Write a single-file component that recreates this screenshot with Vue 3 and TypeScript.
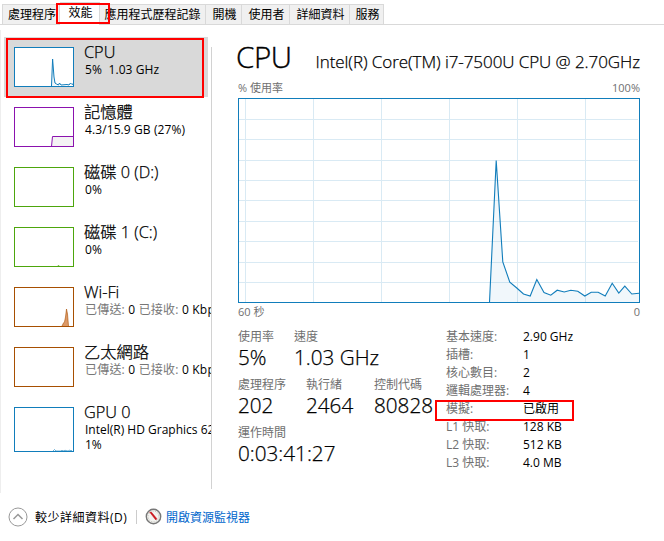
<script setup lang="ts">
interface Resource {
  name: string
  kind: string
  color: string
  detail?: string
  sent?: string
  received?: string
  extra?: string
  line?: string
  fill?: string
}

const tabs = [
  { label: '處理程序', key: 'processes' },
  { label: '效能', key: 'performance' },
  { label: '應用程式歷程記錄', key: 'history' },
  { label: '開機', key: 'startup' },
  { label: '使用者', key: 'users' },
  { label: '詳細資料', key: 'details' },
  { label: '服務', key: 'services' },
]

const resources: Resource[] = [
  { name: 'CPU', kind: 'cpu', color: '#117dbb', detail: '5%  1.03 GHz', line: '37.5,39 38.6,12 40,30 41,36 42.5,37 44.5,38 45.5,36 47,38 53,37.5 55,38 56.5,36 58,37.5 59.5,36.5', fill: '#f1f6fa' },
  { name: '記憶體', kind: 'memory', color: '#8b12ae', detail: '4.3/15.9 GB (27%)', line: '37.5,39.5 38.5,29.5 60,29.5', fill: '#f4f2f4' },
  { name: '磁碟 0 (D:)', kind: 'disk', color: '#4da60c', detail: '0%' },
  { name: '磁碟 1 (C:)', kind: 'disk', color: '#4da60c', detail: '0%', line: '44,39 44.5,38 45,39', fill: 'none' },
  { name: 'Wi-Fi', kind: 'wifi', color: '#a74f01', sent: '0', received: '0', line: '48,39 49.5,36 50.5,35 51.5,30 52.5,22 53.5,27 54.5,39', fill: '#dd9a68' },
  { name: '乙太網路', kind: 'ethernet', color: '#a74f01', sent: '0', received: '0' },
  { name: 'GPU 0', kind: 'gpu', color: '#117dbb', detail: 'Intel(R) HD Graphics 620', extra: '1%', line: '39,44 40.5,42.5 42,44 47,44 48,43 49,44 51,43.3 54,44 56,43 57,44 58,43', fill: 'none' },
]

const usage = '251.5,204.5 258.2,62.5 264.8,164 271.8,184.2 278.8,190 285.5,196 292.2,198 298.8,181.5 306,194.5 312.8,197.2 319.2,192.2 326.2,194 332.8,192.2 339.8,193.2 346.8,198 353.2,194.2 360.2,194.2 367.2,198 374.2,185.2 380.8,195 386.8,188.2 393.8,196 401,195.2'
const columns = [7.5, 75.5, 143.5, 211.5, 279.5, 347.5]
const rows = [21.5, 41.5, 62.5, 82.5, 102.5, 123.5, 143.5, 164.5, 184.5]

const stats = [
  [{ label: '使用率', value: '5%' }, { label: '速度', value: '1.03 GHz' }],
  [{ label: '處理程序', value: '202' }, { label: '執行緒', value: '2464' }, { label: '控制代碼', value: '80828' }],
  [{ label: '運作時間', value: '0:03:41:27' }],
]

const specs = [
  { label: '基本速度:', value: '2.90 GHz' },
  { label: '插槽:', value: '1' },
  { label: '核心數目:', value: '2' },
  { label: '邏輯處理器:', value: '4' },
  { label: '模擬:', value: '已啟用' },
  { label: 'L1 快取:', value: '128 KB' },
  { label: 'L2 快取:', value: '512 KB' },
  { label: 'L3 快取:', value: '4.0 MB' },
]
</script>

<template>
  <main class="window">
    <nav class="tabs">
      <div v-for="tab in tabs" :key="tab.key" class="tab" :class="[tab.key, { active: tab.key === 'performance' }]">
        {{ tab.label }}
        <i v-if="tab.key === 'performance'" class="mark" />
      </div>
    </nav>

    <div class="body">
      <aside class="side">
        <div v-for="r in resources" :key="r.name" class="item" :class="[r.kind, { selected: r.kind === 'cpu' }]">
          <svg class="thumb" width="60" :height="r.kind === 'gpu' ? 45 : 40">
            <rect x="0.5" y="0.5" width="59" :height="r.kind === 'gpu' ? 44 : 39" fill="#fff" :stroke="r.color" />
            <polyline v-if="r.line && r.kind === 'memory'" points="38,39 39,30 59,30 59,39" :fill="r.fill" />
            <polyline v-if="r.line" :points="r.line" :fill="r.kind === 'memory' ? 'none' : r.fill" :stroke="r.color" :stroke-width="r.kind === 'cpu' || r.kind === 'memory' ? 1 : 0.6" />
          </svg>
          <div class="text">
            <div class="name">{{ r.name }}</div>
            <div v-if="r.detail" class="detail">{{ r.detail }}</div>
            <div v-else class="detail net"><span>已傳送:</span> {{ r.sent }} <span>已接收:</span> {{ r.received }} Kbps</div>
            <div v-if="r.extra" class="detail extra">{{ r.extra }}</div>
          </div>
          <i v-if="r.kind === 'cpu'" class="mark" />
        </div>
      </aside>

      <section class="panel">
        <header class="head">
          <h1>CPU</h1>
          <div class="model">Intel(R) Core(TM) i7-7500U CPU @ 2.70GHz</div>
        </header>
        <div class="axis top"><span>% 使用率</span><span>100%</span></div>
        <svg class="chart" width="402" height="205">
          <g stroke="#d9eaf4">
            <line v-for="x in columns" :key="'c' + x" :x1="x" :x2="x" y1="1" y2="204" />
            <line v-for="y in rows" :key="'r' + y" x1="1" x2="400" :y1="y" :y2="y" />
          </g>
          <polygon :points="usage + ' 401,204.5'" fill="#117dbb" fill-opacity="0.06" />
          <polyline :points="usage" fill="none" stroke="#117dbb" stroke-width="1.1" />
          <rect x="0.5" y="0.5" width="401" height="204" fill="none" stroke="#117dbb" />
        </svg>
        <div class="axis bottom"><span>60 秒</span><span>0</span></div>

        <div class="facts">
          <div class="stats">
            <div v-for="(line, i) in stats" :key="i" class="stat-row" :class="'row' + i">
              <div v-for="s in line" :key="s.label" class="stat">
                <div class="label">{{ s.label }}</div>
                <div class="value">{{ s.value }}</div>
              </div>
            </div>
          </div>
          <dl class="specs">
            <div v-for="s in specs" :key="s.label" class="spec">
              <dt>{{ s.label }}</dt>
              <dd>{{ s.value }}</dd>
              <i v-if="s.label === '模擬:'" class="mark" />
            </div>
          </dl>
        </div>
      </section>
    </div>

    <footer class="foot">
      <svg class="chevron" width="20" height="20" fill="none">
        <circle cx="10" cy="10" r="9" stroke="#999" />
        <path d="M5.5 12 L10 7.5 L14.5 12" stroke="#999" stroke-width="1.5" />
      </svg>
      <span class="fewer">較少詳細資料(D)</span>
      <i class="rule" />
      <svg class="gauge" width="17" height="17" fill="none">
        <circle cx="8.5" cy="8.5" r="7.2" fill="#f3f3f0" stroke="#777" stroke-width="1.4" />
        <circle cx="8.5" cy="8.5" r="5.4" stroke="#b8b8b0" stroke-width="1" stroke-dasharray="1 1.4" />
        <path d="M4.6 4.1 L6.6 4.3 L11.9 10.8 L10.8 12 Z" fill="#c9141b" stroke="#c9141b" stroke-width="0.5" />
      </svg>
      <a class="monitor">開啟資源監視器</a>
    </footer>
  </main>
</template>

<style>
body {
  background: #fff;
}
</style>

<style scoped>
* {
  box-sizing: border-box;
}

.window {
  width: 664px;
  height: 541px;
  overflow: hidden;
  display: flex;
  flex-direction: column;
  font-family: 'Open Sans', 'Noto Sans CJK TC', sans-serif;
  font-size: 12px;
  color: #000;
  background: #fff;
}

.tabs {
  display: flex;
  height: 25px;
  padding: 4px 0 0 2px;
  box-shadow: inset 0 -1px #d9d9d9;
}

.tab {
  height: 21px;
  padding-left: 2px;
  border: 1px solid #d9d9d9;
  border-left: 0;
  background: #f0f0f0;
  line-height: 19px;
  text-align: center;
  white-space: nowrap;
}

.processes {
  width: 58px;
  border-left: 1px solid #d9d9d9;
}

.performance {
  width: 40px;
}

.history {
  width: 106px;
  padding-left: 0;
}

.startup {
  width: 36px;
}

.users {
  width: 48px;
}

.details {
  width: 60px;
}

.services {
  width: 34px;
}

.tab.active {
  position: relative;
  height: 23px;
  margin-top: -2px;
  padding-left: 2px;
  border-bottom: 0;
  background: #fff;
  line-height: 20px;
}

.mark {
  position: absolute;
  z-index: 2;
  border: 2px solid #f00;
}

.tab .mark {
  left: -4px;
  top: 0;
  width: 54px;
  height: 21px;
}

.body {
  display: flex;
  height: 468px;
  padding-top: 5px;
}

.side {
  width: 212px;
  height: 463px;
  padding: 7px 0 0 3px;
  border-left: 1px solid #eee;
  background: linear-gradient(#d2d2d2, #d2d2d2) right 0 top 17px / 1px 442px no-repeat;
}

.item {
  position: relative;
  display: flex;
  gap: 10px;
  width: 207px;
  height: 60px;
  padding: 10px 0 0 10px;
  overflow: hidden;
}

.selected {
  width: 204px;
  background: #d9d9d9;
  overflow: visible;
}

.item .mark {
  left: 2px;
  top: 1px;
  width: 198px;
  height: 60px;
}

.gpu {
  height: 70px;
}

.thumb {
  flex: none;
}

.text {
  margin-top: -7px;
  white-space: nowrap;
}

.name {
  height: 22px;
  font-size: 16.3px;
  line-height: 24px;
  font-weight: 300;
  -webkit-text-stroke: 0.25px;
}

.detail {
  height: 15px;
  padding-left: 1px;
  line-height: 16px;
  letter-spacing: 0.1px;
  white-space: pre;
}

.gpu .detail {
  letter-spacing: 0;
}

.net {
  letter-spacing: 0.2px;
}

.detail span {
  color: #777;
}

.panel {
  width: 452px;
  padding: 7px 24px 0 26px;
}

.head {
  display: flex;
  align-items: baseline;
  justify-content: space-between;
  height: 42px;
  white-space: nowrap;
}

h1 {
  margin: 0 0 0 -2px;
  font-size: 29.5px;
  line-height: 40px;
  font-weight: 300;
  letter-spacing: -0.4px;
  -webkit-text-stroke: 0.4px;
}

.model {
  font-size: 17px;
  font-weight: 300;
  letter-spacing: -0.07px;
  -webkit-text-stroke: 0.25px;
}

.axis {
  display: flex;
  justify-content: space-between;
  color: #707070;
  font-size: 11px;
  line-height: 18px;
}

.top {
  height: 19px;
}

.chart {
  display: block;
}

.facts {
  display: flex;
  padding-top: 7px;
}

.stats {
  width: 208px;
}

.stat-row {
  display: flex;
  height: 48px;
}

.label {
  height: 17px;
  line-height: 17px;
  color: #707070;
}

.value {
  font-size: 20.7px;
  line-height: 24px;
  font-weight: 300;
  white-space: nowrap;
  -webkit-text-stroke: 0.25px;
}

.row0 .stat {
  width: 56px;
}

.row1 .stat {
  width: 68px;
}

.specs {
  margin: 0;
}

.spec {
  position: relative;
  display: flex;
  height: 18px;
  line-height: 18px;
  white-space: nowrap;
}

dt {
  width: 77px;
  color: #707070;
}

dd {
  margin: 0;
}

.spec .mark {
  left: -11px;
  top: 0;
  width: 139px;
  height: 21px;
}

.foot {
  display: flex;
  align-items: center;
  height: 47px;
  padding-left: 8px;
}

.fewer {
  width: 94px;
  margin-left: 7px;
  letter-spacing: 0.5px;
  white-space: nowrap;
}

.rule {
  width: 1px;
  height: 14px;
  margin: 0 8px 0 7px;
  background: #ccc;
}

.monitor {
  margin-left: 4px;
  color: #06c;
}
</style>
